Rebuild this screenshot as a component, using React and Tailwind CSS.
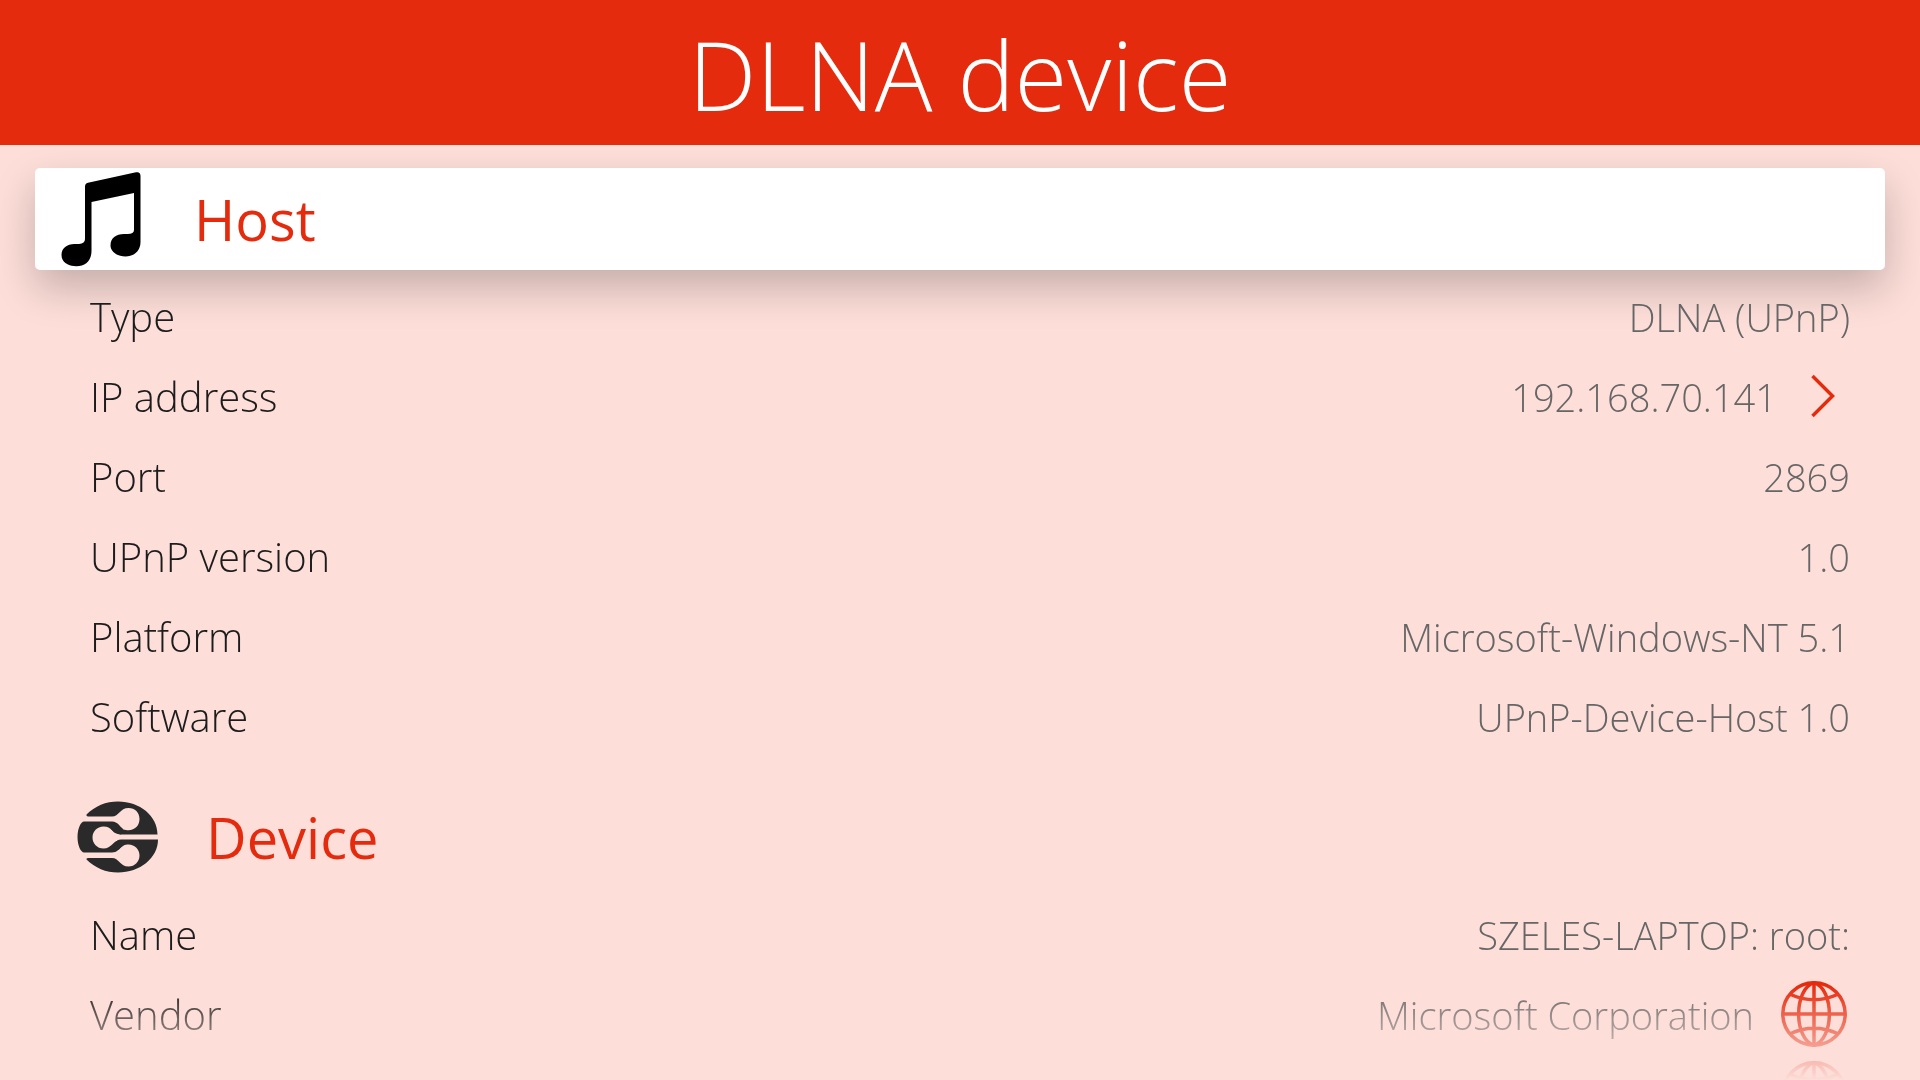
function NotesIcon() {
  return (
    <svg aria-hidden="true" viewBox="0 0 80 96" className="h-24 w-20 shrink-0" fill="#000">
      <path d="M24 15.500Q24 12.500 27 11.700L75 1.300Q79.500 0.500 79.500 5V71C79.500 80 73 85.500 64.500 85.500C56 85.500 49.500 80.500 49.500 74.500C49.500 67 55 63 63 63H66.500Q73 63 73 59V22L30.500 31V80C30.500 90 24 95.300 15.500 95.300C7 95.300 0.500 91 0.500 84C0.500 77 6 73 13.500 73H18Q24 72.500 24 68Z" />
    </svg>
  );
}

function DeviceIcon() {
  return (
    <svg aria-hidden="true" viewBox="0 0 82 72" className="h-[72px] w-[82px] shrink-0" fill="#2a2a2a">
      <path d="M9.500 13.500C18 5 29 0.500 41 0.500C63 0.500 80.500 15 80.500 33.500H44C38 33 36.500 31 34 28L41 25C45 28.500 48 29.200 51.500 29.200C58 29.200 62.500 24.500 62.500 18C62.500 11.500 58 7 51.500 7C43 7 42 15.500 35 15.500H11Q9 15.500 9.500 13.500Z" />
      <path d="M7 20.500H35C41 21 42.500 25 46 28L44 33.500C35 32.500 35 25.500 26.500 25.500C20 25.500 15.500 30.500 15.500 36.500C15.500 42.500 20 47.500 26.500 47.500C35 47.500 35 40 43 39L47 44C42 48 40 51.500 35 51.500H7C4 51.500 0.500 45 0.500 36C0.500 27 4 20.500 7 20.500Z" />
      <path d="M81 38.500H44C38 39 38 43 33 48L41 49C45 44.500 48 43.500 51.500 43.500C58 43.500 62.500 48.500 62.500 54.500C62.500 60.500 58 65.500 51.500 65.500C43 65.500 42 57 35 57H11Q9 57 9.500 58.500C18 67 29 71.500 41 71.500C63 71.500 81 57 81 38.500Z" />
    </svg>
  );
}

function GlobeIcon() {
  return (
    <svg viewBox="0 0 66 66" className="size-[66px] shrink-0" fill="none" stroke="#e52b0e" strokeWidth="3.500" aria-hidden="true">
      <circle cx="33" cy="33" r="31.200" />
      <path d="M33 1.500C12.500 8 12.500 58 33 64.500C53.500 58 53.500 8 33 1.500Z" />
      <path d="M33 1.500V64.500M1.500 33H64.500M8.500 13Q33 24.500 57.500 13M8.500 53Q33 41.500 57.500 53" />
    </svg>
  );
}

function ChevronIcon() {
  return (
    <svg viewBox="0 0 24 44" className="mr-[15px] h-11 w-6 shrink-0" fill="none" stroke="#e52b0e" strokeWidth="3.500" aria-hidden="true">
      <path d="M1.500 2L21.500 22L1.500 42" />
    </svg>
  );
}

const hostRows = [
  { label: "Type", value: "DLNA (UPnP)" },
  { label: "IP address", value: "192.168.70.141", action: "open" },
  { label: "Port", value: "2869" },
  { label: "UPnP version", value: "1.0" },
  { label: "Platform", value: "Microsoft-Windows-NT 5.1" },
  { label: "Software", value: "UPnP-Device-Host 1.0" },
];

const deviceRows = [
  { label: "Name", value: "SZELES-LAPTOP: root:" },
  { label: "Vendor", value: "Microsoft Corporation", action: "web" },
  { label: "", value: "", action: "web" },
];

function Rows({ rows }) {
  return (
    <dl className="mt-[7px]">
      {rows.map((row, i) => (
        <div key={i} className="flex h-20 items-center justify-between pr-[70px] pl-[90px] font-light">
          <dt className="text-[40px] text-[#1c1c1c]">{row.label}</dt>
          <dd className="flex items-center text-[38px] text-[#666]">
            {row.value}
            {row.action === "open" && (
              <button type="button" aria-label="Open address" className="mb-0.5 ml-[34px]">
                <ChevronIcon />
              </button>
            )}
            {row.action === "web" && (
              <a href="#web" aria-label="Open website" className="mr-[3px] mb-0.5 ml-[27px]">
                <GlobeIcon />
              </a>
            )}
          </dd>
        </div>
      ))}
    </dl>
  );
}

export default function App() {
  return (
    <div className="flex h-screen flex-col overflow-hidden bg-[#fdded9] font-['Open_Sans',sans-serif]">
      <header className="h-[145px] shrink-0 bg-[#e52b0e] text-center">
        <h1 className="text-[96px] leading-[148px] font-light text-white">DLNA device</h1>
      </header>
      <main className="min-h-0 flex-1 overflow-hidden mask-linear-180 mask-linear-from-[840px] mask-linear-to-[935px]">
        <section className="pt-[23px]">
          <h2 className="mx-[35px] rounded-[5px] bg-white text-[56px] leading-[102px] text-[#e52b0e] shadow-[0_18px_40px_rgba(0,0,0,0.22)]">
            <button type="button" className="flex h-[102px] w-full items-center pl-[26px] text-left">
              <NotesIcon />
              <span className="ml-[53px]">Host</span>
            </button>
          </h2>
          <Rows rows={hostRows} />
        </section>
        <section className="pt-[29px]">
          <h2 className="mx-[35px] flex h-[102px] items-center pl-[42px] text-[56px] leading-[102px] text-[#e52b0e]">
            <DeviceIcon />
            <span className="ml-[47px]">Device</span>
          </h2>
          <Rows rows={deviceRows} />
        </section>
      </main>
    </div>
  );
}
